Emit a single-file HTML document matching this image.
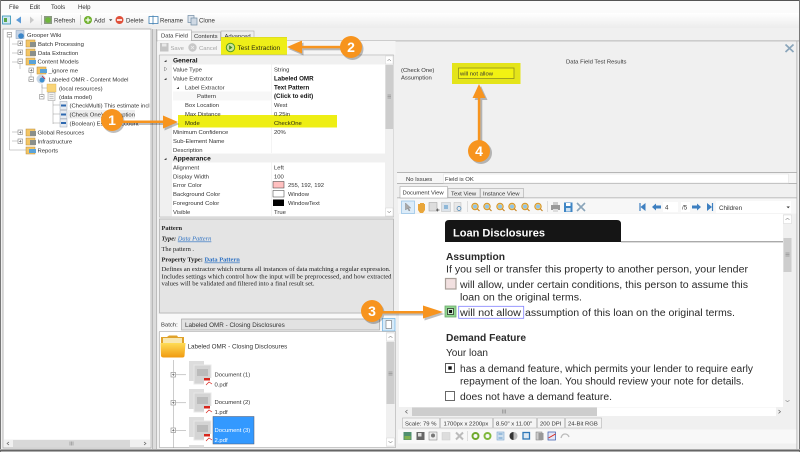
<!DOCTYPE html>
<html><head><meta charset="utf-8"><style>
html,body{margin:0;padding:0;width:800px;height:452px;overflow:hidden;background:#f0f0f0}
svg{display:block;filter:blur(.35px)}
text{font-family:"Liberation Sans",sans-serif;font-size:5.900px;fill:#333}
.t{font-size:6.100px}
.s{font-family:"Liberation Serif",serif;font-size:6.400px;fill:#222}
.d{font-size:10px;fill:#2a2a2a}
.h{font-size:10px;fill:#2a2a2a;font-weight:bold}
.b{font-weight:bold;fill:#111;font-size:6.200px}
.n{font-size:14px;font-weight:bold;fill:#fff;text-anchor:middle}
</style></head><body>
<svg width="800" height="452" viewBox="0 0 800 452" xmlns="http://www.w3.org/2000/svg">
<defs>
<linearGradient id="tb" x1="0" y1="0" x2="0" y2="1"><stop offset="0" stop-color="#fff"/><stop offset="1" stop-color="#ececec"/></linearGradient>
<linearGradient id="fo" x1="0" y1="0" x2="0" y2="1"><stop offset="0" stop-color="#ffdc55"/><stop offset="1" stop-color="#f09a10"/></linearGradient>
<g id="fld"><rect x="0" y="1" width="9" height="7" fill="#f3c565" stroke="#b98d3a" stroke-width=".5"/><rect x="4" y="3" width="6" height="5" fill="#8a8f8a"/></g>
<g id="fb"><rect x="0" y="1" width="9" height="7" fill="#f3c565" stroke="#b98d3a" stroke-width=".5"/><rect x="3" y="3" width="7" height="4" fill="#5ba3d8"/></g>
<g id="doc"><rect width="7" height="8" fill="#e8ecf2" stroke="#9aa4b2" stroke-width=".5"/><rect x="1" y="3" width="5" height="2" fill="#2d68b0"/></g>
<g id="pl"><rect width="4.500" height="4.500" fill="#fff" stroke="#888" stroke-width=".6"/><path d="M1 2.250h2.500M2.250 1v2.500" stroke="#444" stroke-width=".5"/></g>
<g id="mi"><rect width="4.500" height="4.500" fill="#fff" stroke="#888" stroke-width=".6"/><path d="M1 2.250h2.500" stroke="#444" stroke-width=".5"/></g>
<g id="dc"><rect x="0" y="0" width="15" height="20" fill="#ddd"/><rect x="5" y="4" width="17" height="19" fill="#d4d4d4" stroke="#e8e8e8"/><rect x="8" y="8" width="11" height="7" fill="#bbb"/><rect x="15" y="17" width="8" height="8" fill="#fff"/><rect x="15" y="17" width="6" height="2.500" fill="#d8261c"/><path d="M17 24l3-3 3 2" stroke="#d8261c" stroke-width=".7" fill="none"/></g>
<g id="mag"><circle cx="4" cy="4" r="3.200" fill="#f3d27a" stroke="#d4942a"/><circle cx="4" cy="4" r="2" fill="#8fc3e8"/><path d="M6 6l2.500 2.500" stroke="#c8872a" stroke-width="1.200"/></g>
</defs>

<rect width="800" height="452" fill="#f0f0f0"/>

<!-- menu -->
<rect y="1" width="800" height="12" fill="#fbfbfb"/>
<text class="t" x="9" y="9">File</text><text class="t" x="29.500" y="9">Edit</text><text class="t" x="51" y="9">Tools</text><text class="t" x="78" y="9">Help</text>

<!-- toolbar -->
<rect y="13" width="800" height="15" fill="url(#tb)"/>
<rect x="2.500" y="16" width="8" height="8" fill="#cfe8f4" stroke="#2f8fb3" stroke-width=".8"/><rect x="4" y="18" width="3" height="4" fill="#5aa648"/>
<path d="M16 20l5-3.500v7z" fill="#5c9bd8"/><path d="M34 20l-4-3.500v7z" fill="#c9c9c9"/>
<rect x="41" y="15" width=".7" height="10" fill="#bbb"/>
<rect x="44" y="16" width="8" height="8" fill="#8a9a80"/><circle cx="48" cy="20" r="2.800" fill="#6fb83b"/>
<text class="t" x="54" y="22.500">Refresh</text>
<rect x="80" y="15" width=".7" height="10" fill="#bbb"/>
<circle cx="88" cy="20" r="4" fill="#6fb02c"/><path d="M85.500 20h5M88 17.500v5" stroke="#fff" stroke-width="1.200"/>
<text class="t" x="94" y="22.500">Add</text><path d="M109 19.300h3.400l-1.700 1.800z" fill="#444"/>
<circle cx="119.500" cy="20" r="4" fill="#e0503a"/><rect x="117" y="19.200" width="5" height="1.600" fill="#fff"/>
<text class="t" x="126" y="22.500">Delete</text>
<rect x="149" y="16.500" width="9" height="7" fill="#fff" stroke="#3f7fb2" stroke-width=".8"/><path d="M153 15.500v9" stroke="#3f7fb2" stroke-width=".8"/>
<text class="t" x="160" y="22.500">Rename</text>
<rect x="188" y="15.500" width="6" height="7" fill="#dfe6ee" stroke="#6f8aa3" stroke-width=".7"/><rect x="191" y="18" width="6" height="7" fill="#cfd9e4" stroke="#6f8aa3" stroke-width=".7"/>
<text class="t" x="199" y="22.500">Clone</text>

<!-- tree panel -->
<rect x="3" y="29" width="148" height="419" fill="#fff" stroke="#a8a8a8" stroke-width=".8"/>
<g stroke="#999" stroke-width=".5" fill="none">
<path d="M9.500 36v114h17M20 62v7M20 44h-8M20 53h-8M20 62h-8M20 132h-8M20 141h-8M31 71h-3M31 80h-3M42 85v11h-2M53 101v23M53 105h7M53 114h7M53 123h7"/>
<path d="M31 68v12M42 84v4h5"/>
</g>
<use href="#mi" x="7.200" y="32.500"/>
<rect x="16" y="30.500" width="8" height="8" fill="#c6d4e6" stroke="#8399b3" stroke-width=".5"/><circle cx="21" cy="36" r="2.800" fill="#3b86c9"/>
<text x="27" y="36.800">Grooper Wiki</text>
<use href="#pl" x="18" y="41"/><use href="#fld" x="26" y="39"/><text x="38" y="45.800">Batch Processing</text>
<use href="#pl" x="18" y="50"/><use href="#fld" x="26" y="48"/><text x="38" y="54.800">Data Extraction</text>
<use href="#mi" x="18" y="59"/><use href="#fb" x="26" y="57"/><text x="37.500" y="63.500">Content Models</text>
<use href="#pl" x="29" y="68"/><use href="#fb" x="37" y="66"/><text x="48.500" y="72.500">_ignore me</text>
<use href="#mi" x="29" y="77"/><circle cx="41" cy="79" r="4.500" fill="#c9d7e6"/><circle cx="42" cy="80" r="2.500" fill="#3c8fd0"/><path d="M42 76l3 3" stroke="#c23" stroke-width=".8"/><text x="48.500" y="81.500">Labeled OMR - Content Model</text>
<rect x="47" y="84" width="9" height="8" fill="#f9d477" stroke="#d8b050" stroke-width=".4"/><text x="59" y="90.300">(local resources)</text>
<use href="#mi" x="39.500" y="94.500"/><rect x="48" y="92.500" width="7" height="8" fill="#f2f2f2" stroke="#999" stroke-width=".5"/><path d="M49.500 94.500h4M49.500 96.500h4M49.500 98.500h4" stroke="#999" stroke-width=".5"/><text x="59" y="99">(data model)</text>
<use href="#doc" x="60" y="101.500"/><text x="69.500" y="107.700">(CheckMulti) This estimate incl</text>
<rect x="68" y="110" width="67" height="8.500" fill="#eeeeee"/>
<use href="#doc" x="60" y="110.500"/><text x="69.500" y="116.500">(Check One) Assumption</text>
<use href="#doc" x="60" y="119"/><text x="69.500" y="125.500">(Boolean) Escrow Account</text>
<use href="#pl" x="18" y="130"/><use href="#fld" x="26" y="128"/><text x="37.500" y="134.500">Global Resources</text>
<use href="#pl" x="18" y="139"/><use href="#fld" x="26" y="137"/><text x="37.500" y="143.500">Infrastructure</text>
<use href="#fb" x="26" y="146"/><text x="37.500" y="152.500">Reports</text>
<rect x="4" y="439.500" width="146" height="8" fill="#f0f0f0"/><rect x="13" y="440" width="117" height="7" fill="#d8d8d8"/>
<path d="M9 442l-2 1.500 2 1.500M144 442l2 1.500-2 1.500" stroke="#555" stroke-width=".6" fill="none"/>
<path d="M70 441.500v4M71.500 441.500v4M73 441.500v4" stroke="#777" stroke-width=".5"/>

<!-- splitter / frame -->
<rect x="152" y="29" width="4" height="421" fill="#dcdcdc"/>
<rect x="152" y="29" width=".8" height="421" fill="#b0b0b0"/><rect x="156" y="29" width=".8" height="421" fill="#b0b0b0"/>

<!-- tabs -->
<rect x="157" y="40.500" width="642" height=".8" fill="#a8a8a8"/>
<rect x="157" y="30" width="34.500" height="11" fill="#fff" stroke="#aaa" stroke-width=".6"/>
<rect x="191.500" y="32" width="29" height="8.500" fill="#eee" stroke="#aaa" stroke-width=".6"/>
<rect x="221" y="31" width="33" height="9.500" fill="#eee" stroke="#aaa" stroke-width=".6"/>
<text x="161" y="37.500">Data Field</text><text x="194" y="38">Contents</text><text x="224.500" y="38">Advanced</text>

<!-- top toolbar panel -->
<rect x="157.500" y="41" width="238" height="14" fill="#f5f5f5"/>
<rect x="160" y="43" width="8.500" height="8.500" fill="#c4c4c4"/><rect x="162" y="43.500" width="4.500" height="3" fill="#e8e8e8"/>
<text x="170.500" y="50" style="fill:#a5a5a5">Save</text>
<circle cx="192.500" cy="47.500" r="4.200" fill="#c8c8c8"/><path d="M191 46l3 3M194 46l-3 3" stroke="#eee" stroke-width=".8"/>
<text x="199" y="50" style="fill:#a5a5a5">Cancel</text>
<rect x="221" y="37" width="66" height="20" fill="#eeee18"/>
<rect x="221" y="37" width="66" height="1" fill="#dede20"/><rect x="221" y="56" width="66" height="1" fill="#d9d918"/>
<circle cx="230.500" cy="47.500" r="4.200" fill="#cbe29b" stroke="#4f9a2a"/><path d="M229.200 45.300l3.200 2.200-3.200 2.200z" fill="#3d8a1f"/>
<text x="237.500" y="50" style="font-size:6.500px;fill:#2a2a10">Test Extraction</text>

<!-- property grid -->
<rect x="159.500" y="55" width="234" height="162" fill="#fff" stroke="#a8a8a8" stroke-width=".6"/>
<rect x="160" y="55.500" width="12" height="161" fill="#f0f0f0"/>
<rect x="160" y="55.500" width="225" height="9" fill="#f0f0f0"/><rect x="160" y="153.500" width="225" height="9" fill="#f0f0f0"/>
<rect x="173" y="91.500" width="98" height="9" fill="#f7f7f7"/>
<rect x="271.500" y="64" width=".5" height="89" fill="#eaeaea"/><rect x="271.500" y="162" width=".5" height="55" fill="#eaeaea"/>
<path d="M164 62l2.500-2.300v2.300zM164 160l2.500-2.300v2.300zM164 80l2.500-2.300v2.300zM176.500 89l2.500-2.300v2.300z" fill="#444"/>
<path d="M164.500 67l2.500 2-2.500 2z" fill="#fff" stroke="#777" stroke-width=".5"/>
<rect x="178" y="115" width="159" height="12.500" fill="#eeee14"/>
<text class="b" x="173" y="62.500" style="font-size:6.600px">General</text>
<text x="173" y="71.500">Value Type</text><text x="274" y="71.500">String</text>
<text x="173" y="80.500">Value Extractor</text><text class="b" x="274" y="80.500">Labeled OMR</text>
<text x="185" y="89.500">Label Extractor</text><text class="b" x="274" y="89.500">Text Pattern</text>
<text x="197" y="98">Pattern</text><text class="b" x="274" y="98">(Click to edit)</text>
<text x="185" y="107">Box Location</text><text x="274" y="107">West</text>
<text x="185" y="116">Max Distance</text><text x="274" y="116">0.25in</text>
<text x="185" y="125" style="fill:#2a2a10">Mode</text><text x="274" y="125" style="fill:#2a2a10">CheckOne</text>
<text x="173" y="133.800">Minimum Confidence</text><text x="274" y="133.800">20%</text>
<text x="173" y="142.800">Sub-Element Name</text>
<text x="173" y="151.800">Description</text>
<text class="b" x="173" y="160.500" style="font-size:6.600px">Appearance</text>
<text x="173" y="169.500">Alignment</text><text x="274" y="169.500">Left</text>
<text x="173" y="178.300">Display Width</text><text x="274" y="178.300">100</text>
<text x="173" y="187.200">Error Color</text><rect x="273" y="181.500" width="11" height="6.500" fill="#ffc0c0" stroke="#333" stroke-width=".5"/><text x="288" y="187.200">255, 192, 192</text>
<text x="173" y="196">Background Color</text><rect x="273" y="190.500" width="11" height="6.500" fill="#fff" stroke="#333" stroke-width=".5"/><text x="288" y="196">Window</text>
<text x="173" y="205">Foreground Color</text><rect x="273" y="199.500" width="11" height="6.500" fill="#000"/><text x="288" y="205">WindowText</text>
<text x="173" y="213.800">Visible</text><text x="274" y="213.800">True</text>
<rect x="385" y="55.500" width="8.500" height="161" fill="#f0f0f0"/>
<rect x="385.500" y="65" width="7.500" height="64" fill="#cdcdcd"/>
<rect x="385.500" y="56" width="7.500" height="8" fill="#fff" stroke="#ccc" stroke-width=".4"/><rect x="385.500" y="208" width="7.500" height="8" fill="#fff" stroke="#ccc" stroke-width=".4"/>
<path d="M387.500 61l1.700-1.800 1.700 1.800M387.500 211l1.700 1.800 1.700-1.800" stroke="#555" stroke-width=".5" fill="none"/>
<path d="M387.500 95h3.500M387.500 96.500h3.500M387.500 98h3.500" stroke="#777" stroke-width=".5"/>

<!-- help pane -->
<rect x="159.500" y="219" width="234" height="94" fill="#e4e4e4" stroke="#a0a0a0" stroke-width=".6"/>
<text class="s" x="161.500" y="230" style="font-weight:bold">Pattern</text>
<text class="s" x="161.500" y="240.500" style="font-style:italic"><tspan font-weight="bold">Type:</tspan> <tspan text-decoration="underline" style="fill:#2a6fc2">Data Pattern</tspan></text>
<text class="s" x="161.500" y="251">The pattern .</text>
<text class="s" x="161.500" y="261.500"><tspan font-weight="bold">Property Type:</tspan> <tspan text-decoration="underline" font-weight="bold" style="fill:#2a6fc2">Data Pattern</tspan></text>
<text class="s" x="161.500" y="271" textLength="229" lengthAdjust="spacingAndGlyphs">Defines an extractor which returns all instances of data matching a regular expression.</text>
<text class="s" x="161.500" y="278.500" textLength="230" lengthAdjust="spacingAndGlyphs">Includes settings which control how the input will be preprocessed, and how extracted</text>
<text class="s" x="161.500" y="285.500" textLength="153" lengthAdjust="spacingAndGlyphs">values will be validated and filtered into a final result set.</text>

<!-- batch -->
<rect x="158" y="314" width="238" height="18" fill="#f8f8f8"/>
<text x="161" y="326.500">Batch:</text>
<rect x="181.500" y="319" width="198" height="11" fill="#e2e2e2" stroke="#a5a5a5" stroke-width=".7"/>
<text x="185" y="326.800" style="font-size:6.300px">Labeled OMR - Closing Disclosures</text>
<rect x="382.500" y="318.500" width="12.500" height="12.500" fill="#d7ebfa" stroke="#6aafe0" stroke-width=".7"/>
<rect x="386" y="320.500" width="5.500" height="8" fill="#fff" stroke="#555" stroke-width=".5"/>

<!-- batch tree -->
<rect x="159.500" y="331.500" width="236" height="116" fill="#fff" stroke="#a8a8a8" stroke-width=".6"/>
<rect x="386" y="332" width="9" height="115" fill="#f0f0f0"/>
<rect x="386.500" y="342" width="8" height="62" fill="#cdcdcd"/>
<rect x="386.500" y="333" width="8" height="8" fill="#fff" stroke="#ccc" stroke-width=".4"/><rect x="386.500" y="438" width="8" height="8" fill="#fff" stroke="#ccc" stroke-width=".4"/>
<path d="M388.500 338l2-2 2 2M388.500 441l2 2 2-2" stroke="#555" stroke-width=".5" fill="none"/>
<path d="M388.500 372h4M388.500 373.500h4M388.500 375h4" stroke="#777" stroke-width=".5"/>
<path d="M161 337h6l2-1.500h8l1 1.500h6v19h-23z" fill="#e0a22a"/>
<rect x="163" y="338" width="19" height="5" fill="#f8e7b0"/>
<path d="M160.500 343h25l-1 13q-.3 1.500-2 1.500h-19q-2 0-2.500-1.500z" fill="url(#fo)"/>
<text x="187.500" y="348.700" style="font-size:6.300px">Labeled OMR - Closing Disclosures</text>
<path d="M173.500 360v88" stroke="#999" stroke-width=".5"/>
<use href="#pl" x="171" y="372.500"/><path d="M176 374.800h10" stroke="#999" stroke-width=".5"/>
<use href="#pl" x="171" y="400.500"/><path d="M176 402.800h10" stroke="#999" stroke-width=".5"/>
<use href="#pl" x="171" y="428"/><path d="M176 430.300h10" stroke="#999" stroke-width=".5"/>
<use href="#dc" x="189" y="361"/><use href="#dc" x="189" y="389"/><use href="#dc" x="189" y="417"/>
<rect x="189" y="445" width="15" height="2.500" fill="#ddd"/>
<rect x="213" y="416.500" width="41" height="27.500" fill="#3399ff" stroke="#556" stroke-width=".5"/>
<text x="214.500" y="376.500">Document (1)</text><text x="214.500" y="386.500">0.pdf</text>
<text x="214.500" y="404">Document (2)</text><text x="214.500" y="414">1.pdf</text>
<text x="214.500" y="432" style="fill:#fff">Document (3)</text><text x="214.500" y="442" style="fill:#fff">2.pdf</text>

<!-- results panel -->
<text x="566" y="63.300">Data Field Test Results</text>
<text x="401" y="72.200">(Check One)</text><text x="401" y="79.500">Assumption</text>
<rect x="452" y="63" width="68.500" height="21" fill="#e4e41a"/>
<rect x="458.500" y="68" width="55.500" height="10.500" fill="#f2f212" stroke="#8f8f1e" stroke-width=".8"/>
<text x="460" y="75.500" textLength="33" lengthAdjust="spacingAndGlyphs">will not allow</text>
<path d="M785.500 44.500l8 7.500M793.500 44.500l-8 7.500" stroke="#8aa5ba" stroke-width="1.700"/>

<!-- status strip -->
<rect x="397" y="173" width="400" height="10" fill="#f6f6f6"/>
<rect x="397" y="172" width="400" height=".8" fill="#a8a8a8"/>
<rect x="397" y="183" width="400" height=".8" fill="#a8a8a8"/>
<rect x="443.500" y="174" width="345" height="9" fill="#fff" stroke="#ddd" stroke-width=".5"/>
<text x="406" y="181">No Issues</text><text x="445" y="181">Field is OK</text>

<!-- doc tabs -->
<rect x="397" y="197.500" width="400" height=".7" fill="#a8a8a8"/>
<rect x="400" y="186.500" width="47.500" height="11.500" fill="#fff" stroke="#aaa" stroke-width=".6"/>
<rect x="448" y="188.500" width="32" height="9" fill="#eee" stroke="#aaa" stroke-width=".6"/>
<rect x="480.500" y="188.500" width="43" height="9" fill="#eee" stroke="#aaa" stroke-width=".6"/>
<text x="402.500" y="194.500">Document View</text><text x="451" y="195.500">Text View</text><text x="483" y="195.500">Instance View</text>

<!-- doc toolbar -->
<rect x="398" y="198.500" width="399" height="15" fill="#f7f7f7"/>
<rect x="401.500" y="201" width="13" height="12.500" fill="#dcecf9" stroke="#8fbfe6" stroke-width=".7"/><path d="M405.500 203v7l2-1.500 1.500 2.500 1-.5-1.500-2.500h2.300z" fill="#aaa" stroke="#777" stroke-width=".4"/>
<path d="M418 204h2v-1h4v1h1v6l-2 3h-3l-2-3z" fill="#e9a63a"/>
<rect x="429" y="202.500" width="8" height="8.500" fill="#ddd" stroke="#999" stroke-width=".5"/><path d="M436 210h3.500M437.700 208.500v3" stroke="#444" stroke-width=".7"/>
<rect x="441.500" y="202.500" width="9" height="9" fill="#dce3ea" stroke="#bbb" stroke-width=".5"/><rect x="444" y="205" width="4" height="4" fill="#8fb8d8"/>
<rect x="454" y="202.500" width="7" height="9" fill="#e8e8e8" stroke="#bbb" stroke-width=".5"/><circle cx="459" cy="208.500" r="2" fill="none" stroke="#3f7fb2" stroke-width=".7"/>
<rect x="467" y="201" width=".6" height="11" fill="#ccc"/>
<use href="#mag" x="471" y="202.500"/><use href="#mag" x="483" y="202.500"/><use href="#mag" x="496" y="202.500"/><use href="#mag" x="508" y="202.500"/><use href="#mag" x="521" y="202.500"/><use href="#mag" x="534" y="202.500"/>
<rect x="547" y="201" width=".6" height="11" fill="#ccc"/>
<rect x="551" y="205" width="9" height="5" fill="#999"/><rect x="553" y="202" width="5" height="3" fill="#ccc"/><rect x="553" y="209" width="5" height="3" fill="#ddd"/>
<rect x="564" y="202.500" width="8.500" height="9.500" fill="#3f86c5"/><rect x="566" y="203" width="4.500" height="3" fill="#fff"/><rect x="566" y="208" width="4.500" height="3.500" fill="#cfe2f2"/>
<path d="M577 203l8 8M585 203l-8 8" stroke="#8aa5ba" stroke-width="1.600"/>
<path d="M640 203v8" stroke="#3d7fc0" stroke-width="1.200"/><path d="M645.500 203v8l-5-4z" fill="#3d7fc0"/>
<path d="M652 207l4-3.500v2h5v3h-5v2z" fill="#3d7fc0"/>
<rect x="663" y="202" width="15" height="10" fill="#fff"/><rect x="681" y="202" width="9" height="10" fill="#fff"/>
<text x="665" y="209.500" style="font-size:6.200px">4</text><text x="682" y="209.500" style="font-size:6.200px">/5</text>
<path d="M692 205.500h5v-2l4 3.500-4 3.500v-2h-5z" fill="#3d7fc0"/>
<path d="M707 203v8l5-4z" fill="#3d7fc0"/><path d="M712.500 203v8" stroke="#3d7fc0" stroke-width="1.200"/>
<rect x="716" y="201" width="75" height="12" fill="#fff"/>
<text x="719" y="209.800" style="font-size:6.200px">Children</text>
<path d="M786.500 206.500h3.400l-1.700 1.800z" fill="#333"/>

<!-- doc viewer -->
<rect x="399" y="214" width="384" height="193" fill="#fff"/>
<path d="M445 242v-18q0-4 4-4h168q4 0 4 4v18z" fill="#151515"/>
<rect x="621" y="241.500" width="162" height=".7" fill="#555"/>
<text x="453" y="236.700" textLength="92" lengthAdjust="spacingAndGlyphs" style="font-size:11px;font-weight:bold;fill:#fff">Loan Disclosures</text>
<text class="h" x="446" y="260" textLength="59" lengthAdjust="spacingAndGlyphs">Assumption</text>
<text class="d" x="446" y="272.700" textLength="302" lengthAdjust="spacingAndGlyphs">If you sell or transfer this property to another person, your lender</text>
<rect x="445.500" y="278.500" width="10.500" height="10.500" fill="#f2e0e0" stroke="#aaa09a" stroke-width="1.200"/>
<text class="d" x="460" y="288" textLength="288" lengthAdjust="spacingAndGlyphs">will allow, under certain conditions, this person to assume this</text>
<text class="d" x="460" y="300.700" textLength="122" lengthAdjust="spacingAndGlyphs">loan on the original terms.</text>
<rect x="445" y="306" width="11" height="11" fill="#8fd68f" stroke="#6ca86c" stroke-width=".8"/>
<rect x="447.500" y="308.500" width="6" height="6" fill="#c8eac8" stroke="#222" stroke-width=".7"/><rect x="449" y="310" width="3" height="3" fill="#111"/>
<rect x="458.700" y="306.300" width="65" height="12" fill="none" stroke="#8080ff" stroke-width=".8"/>
<text class="d" x="460" y="316" textLength="61" lengthAdjust="spacingAndGlyphs">will not allow</text>
<text class="d" x="525" y="316" textLength="210" lengthAdjust="spacingAndGlyphs">assumption of this loan on the original terms.</text>
<text class="h" x="446" y="341" textLength="80" lengthAdjust="spacingAndGlyphs">Demand Feature</text>
<text class="d" x="446" y="356" textLength="42" lengthAdjust="spacingAndGlyphs">Your loan</text>
<rect x="445.500" y="363.500" width="9" height="9" fill="#fff" stroke="#333" stroke-width=".8"/><rect x="448.300" y="366.300" width="3.400" height="3.400" fill="#111"/>
<text class="d" x="460" y="372" textLength="293" lengthAdjust="spacingAndGlyphs">has a demand feature, which permits your lender to require early</text>
<text class="d" x="460" y="384.700" textLength="284" lengthAdjust="spacingAndGlyphs">repayment of the loan. You should review your note for details.</text>
<rect x="445.500" y="391.500" width="9" height="9" fill="#fff" stroke="#444" stroke-width=".8"/>
<text class="d" x="460" y="400" textLength="152" lengthAdjust="spacingAndGlyphs">does not have a demand feature.</text>

<!-- doc scrollbars -->
<rect x="783" y="214" width="9" height="193" fill="#f0f0f0"/>
<rect x="783.500" y="238" width="8" height="34" fill="#cdcdcd"/>
<rect x="783.500" y="215" width="8" height="8.500" fill="#fff" stroke="#ccc" stroke-width=".4"/>
<path d="M785.500 220l2-2 2 2M785.500 400l2 2 2-2" stroke="#555" stroke-width=".5" fill="none"/>
<path d="M785.500 253h4M785.500 254.500h4M785.500 256h4" stroke="#777" stroke-width=".5"/>
<rect x="402" y="407.500" width="381" height="8.500" fill="#fff"/>
<rect x="402" y="407.500" width="10" height="8.500" fill="#f0f0f0"/>
<rect x="412" y="407.500" width="185" height="8.500" fill="#cdcdcd"/>
<rect x="776" y="407.500" width="9" height="8.500" fill="#f0f0f0"/>
<path d="M407.500 410l-2 1.700 2 1.700M778.500 410l2 1.700-2 1.700" stroke="#555" stroke-width=".6" fill="none"/>
<path d="M502.500 409.500v4M504 409.500v4M505.500 409.500v4" stroke="#777" stroke-width=".5"/>

<!-- doc status -->
<g fill="#f4f4f4" stroke="#b5b5b5" stroke-width=".6">
<rect x="402.500" y="418" width="37" height="10"/><rect x="440.500" y="418" width="52" height="10"/><rect x="493.500" y="418" width="43" height="10"/><rect x="537.500" y="418" width="27" height="10"/><rect x="565.500" y="418" width="36" height="10"/>
</g>
<text x="405" y="425.300">Scale: 79 %</text><text x="443.500" y="425.300">1700px x 2200px</text><text x="496" y="425.300">8.50" x 11.00"</text><text x="540" y="425.300">200 DPI</text><text x="568" y="425.300">24-Bit RGB</text>

<!-- bottom toolbar -->
<rect x="398" y="429.500" width="399" height="14" fill="#f8f8f8"/>
<rect x="403.500" y="432" width="8" height="8" fill="#4f8f6f"/><rect x="404.500" y="436" width="6" height="3.500" fill="#7fb04f"/>
<rect x="416.500" y="432" width="8" height="8" fill="#666"/><rect x="418" y="433" width="3.500" height="3.500" fill="#ddd"/>
<rect x="429" y="432" width="8" height="8" fill="#eee" stroke="#777" stroke-width=".5"/><circle cx="433" cy="435.500" r="2" fill="#777"/>
<rect x="442" y="432.500" width="8" height="7.500" fill="#ddd" stroke="#ccc" stroke-width=".5"/>
<path d="M456 432.500l7 7M463 432.500l-7 7" stroke="#bbb" stroke-width="2"/>
<rect x="467" y="431" width=".6" height="10" fill="#ccc"/>
<circle cx="475.500" cy="436" r="3" fill="none" stroke="#6fa82c" stroke-width="2"/>
<circle cx="487.500" cy="436" r="3" fill="none" stroke="#7fb83c" stroke-width="2"/>
<rect x="497" y="432" width="7" height="8" fill="#cfe0ee" stroke="#7aa6cf" stroke-width=".6"/><path d="M498.500 434h4M498.500 438h4" stroke="#3d7fc0" stroke-width=".8"/>
<circle cx="513.500" cy="436" r="4" fill="#bbb"/><path d="M513.500 432a4 4 0 0 0 0 8z" fill="#333"/>
<rect x="523" y="432.500" width="6.500" height="6.500" fill="#dfe9f2" stroke="#2f78b8" stroke-width="1.300"/>
<rect x="536" y="432" width="6" height="8" fill="#ccc" stroke="#777" stroke-width=".5"/><rect x="538.500" y="433" width="5" height="7" fill="#999"/>
<rect x="548" y="432" width="7.500" height="8" fill="#e5e5f5" stroke="#3355aa" stroke-width=".7"/><path d="M548.500 438l7-4" stroke="#d8261c" stroke-width="1"/>
<path d="M561 438q1-4 4-4t4 3" stroke="#bbb" stroke-width="1.300" fill="none"/>

<!-- frame -->
<rect x="0" y="0" width="800" height="1" fill="#555"/>
<rect x="0" y="0" width="1" height="452" fill="#777"/>
<rect x="799" y="0" width="1" height="452" fill="#777"/>
<rect x="796.500" y="41" width=".8" height="408" fill="#b0b0b0"/>
<rect x="0" y="449" width="800" height="1" fill="#aaa"/>
<rect x="0" y="450" width="800" height="1.500" fill="#666"/>

<!-- callout 1 -->
<g fill="#000" opacity=".25" transform="translate(1.500 2)"><rect x="122" y="120.500" width="43" height="2.500"/><path d="M178 122l-15-6.500v13z"/><circle cx="112" cy="120" r="11"/></g>
<rect x="122" y="120.500" width="43" height="2.500" fill="#f7941e"/><path d="M178 122l-15-6.500v13z" fill="#f7941e"/><circle cx="112" cy="120" r="11" fill="#f7941e"/>
<text class="n" x="112" y="125.200">1</text>
<!-- callout 2 -->
<g fill="#000" opacity=".25" transform="translate(1.500 2)"><rect x="300" y="45.800" width="42" height="2.500"/><path d="M287 47l15-6.500v13z"/><circle cx="351" cy="47" r="11"/></g>
<rect x="300" y="45.800" width="42" height="2.500" fill="#f7941e"/><path d="M287 47l15-6.500v13z" fill="#f7941e"/><circle cx="351" cy="47" r="11" fill="#f7941e"/>
<text class="n" x="351" y="52.200">2</text>
<!-- callout 3 -->
<g fill="#000" opacity=".25" transform="translate(1.500 2)"><rect x="380" y="311" width="45" height="2.500"/><path d="M443 312l-20-6.500v13z"/><circle cx="372" cy="311" r="11"/></g>
<rect x="380" y="311" width="45" height="2.500" fill="#f7941e"/><path d="M443 312l-20-6.500v13z" fill="#f7941e"/><circle cx="372" cy="311" r="11" fill="#f7941e"/>
<text class="n" x="372" y="316.200">3</text>
<!-- callout 4 -->
<g fill="#000" opacity=".25" transform="translate(2 2)"><rect x="477.800" y="96" width="2.500" height="46"/><path d="M479 84l-6.500 14h13z"/><circle cx="479" cy="151" r="11"/></g>
<rect x="477.800" y="96" width="2.500" height="46" fill="#f7941e"/><path d="M479 84l-6.500 14h13z" fill="#f7941e"/><circle cx="479" cy="151" r="11" fill="#f7941e"/>
<text class="n" x="479" y="156.200">4</text>
</svg>
</body></html>
